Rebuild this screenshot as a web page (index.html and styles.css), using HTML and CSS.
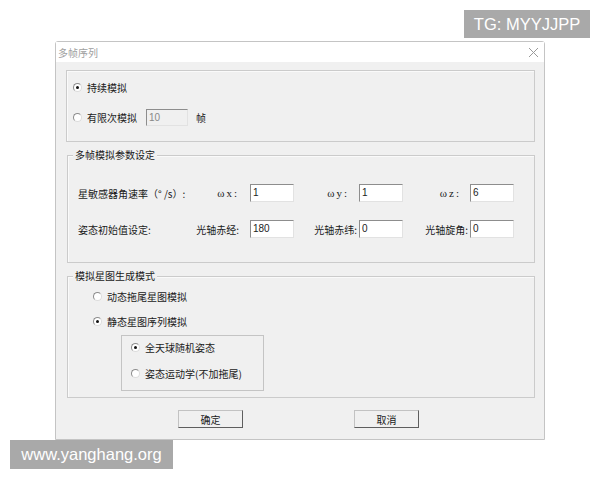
FILE: index.html
```html
<!DOCTYPE html>
<html lang="zh-CN">
<head>
<meta charset="utf-8">
<title>多帧序列</title>
<link rel="stylesheet" href="styles.css">
</head>
<body>
<div class="page">
  <div class="tag tag-tg">TG: MYYJJPP</div>
  <div class="dialog">
    <div class="titlebar">
      <span class="title">多帧序列</span>
      <svg class="close" width="11" height="11" viewBox="0 0 11 11"><path d="M1 1 L10 10 M10 1 L1 10" stroke="#9a9a9a" stroke-width="1" fill="none"/></svg>
    </div>
    <div class="body">
      <div class="group g1">
        <div class="row"><span class="radio on"></span><span>持续模拟</span></div>
        <div class="row"><span class="radio"></span><span>有限次模拟</span><span class="input disabled">10</span><span class="unit">帧</span></div>
      </div>
      <div class="group g2">
        <span class="legend">多帧模拟参数设定</span>
        <div class="grid">
          <span class="main">星敏感器角速率（° /s）:</span>
          <span class="sub c2 omega">ωx:</span><span class="input">1</span>
          <span class="sub c4 omega">ωy:</span><span class="input">1</span>
          <span class="sub c6 omega">ωz:</span><span class="input">6</span>
          <span class="main">姿态初始值设定:</span>
          <span class="sub c2">光轴赤经:</span><span class="input">180</span>
          <span class="sub c4 tight">光轴赤纬:</span><span class="input">0</span>
          <span class="sub c6 tight">光轴旋角:</span><span class="input">0</span>
        </div>
      </div>
      <div class="group g3">
        <span class="legend">模拟星图生成模式</span>
        <div class="row r3"><span class="radio"></span><span>动态拖尾星图模拟</span></div>
        <div class="row r3"><span class="radio on"></span><span>静态星图序列模拟</span></div>
        <div class="inner">
          <div class="row r3"><span class="radio on"></span><span>全天球随机姿态</span></div>
          <div class="row r3"><span class="radio"></span><span>姿态运动学(不加拖尾)</span></div>
        </div>
      </div>
      <div class="buttons">
        <span class="btn">确定</span>
        <span class="btn">取消</span>
      </div>
    </div>
  </div>
  <div class="tag tag-www">www.yanghang.org</div>
</div>
</body>
</html>
```
FILE: styles.css
```css
* { box-sizing: border-box; }
html, body { margin: 0; padding: 0; background: #fff; }
body {
  font-family: "Noto Sans CJK SC", "Noto Sans", sans-serif;
  font-size: 10px;
  color: #1a1a1a;
}
.page {
  position: relative;
  width: 600px;
  height: 480px;
  padding-top: 41px;
  overflow: hidden;
}
.tag {
  position: absolute;
  background: #a9a9a9;
  color: #fff;
  font-family: "Liberation Sans", Arial, sans-serif;
  display: flex;
  align-items: center;
  justify-content: center;
}
.tag-tg { left: 464px; top: 10px; width: 126px; height: 28px; font-size: 16.5px; }
.tag-www { left: 10px; top: 440px; width: 163px; height: 29px; font-size: 16.5px; }

.dialog {
  margin-left: 55px;
  width: 490px;
  border: 1px solid #c4c4c4;
  border-radius: 3px 3px 0 0;
  background: #f0f0f0;
}
.titlebar {
  height: 20px;
  background: #fff;
  display: flex;
  align-items: center;
  justify-content: space-between;
  padding: 0 5px 0 2px;
}
.title { color: #a0a0a0; font-size: 10px; }
.close { display: block; }

.body { padding: 8px 9px 11px 10px; }

.group {
  position: relative;
  border: 1px solid #cbcbcb;
  box-shadow: inset 1px 1px 0 #fafafa;
}
.legend {
  position: absolute;
  left: 5px;
  top: -8px;
  padding: 0 2px;
  background: #f0f0f0;
  line-height: 14px;
}
.row { display: flex; align-items: center; }
.radio {
  width: 9px;
  height: 9px;
  border-radius: 50%;
  border: 1px solid #8c8c8c;
  border-right-color: #dcdcdc;
  border-bottom-color: #dcdcdc;
  background: #fff;
  margin-right: 5px;
  display: flex;
  align-items: center;
  justify-content: center;
  flex: none;
}
.radio.on::after {
  content: "";
  width: 3px;
  height: 3px;
  border-radius: 50%;
  background: #111;
}

.g1 { height: 72px; padding: 7px 0 0 6px; }
.g1 .row { height: 18px; }
.g1 .row + .row { margin-top: 12px; }
.g1 .input { margin-left: 9px; width: 42px; }
.unit { margin-left: 8px; }

.input {
  height: 18px;
  background: #fff;
  border: 1px solid #8d8d8d;
  border-right-color: #e2e2e2;
  border-bottom-color: #e2e2e2;
  font-family: "Liberation Sans", Arial, sans-serif;
  font-size: 10px;
  line-height: 16px;
  padding-left: 2px;
  color: #222;
}
.input.disabled { background: #f0f0f0; color: #888; height: 17px; }

.g2 { margin-top: 13px; height: 108px; margin-left: 1px; }
.grid {
  display: grid;
  grid-template-columns: 110px 62px 44px 65px 44px 67px 44px;
  row-gap: 18px;
  align-items: center;
  padding: 28px 0 0 10px;
}
.sub { text-align: right; white-space: nowrap; }
.c2 { padding-right: 11px; }
.c4 { padding-right: 10px; }
.c6 { padding-right: 9px; }
.tight { padding-right: 2px; }
.omega { font-family: "Liberation Serif", serif; letter-spacing: 2px; font-size: 11px; }

.g3 { margin-top: 13px; height: 122px; margin-left: 1px; padding: 11px 0 0 25px; }
.r3 { height: 16px; }
.g3 > .r3 + .r3 { margin-top: 9px; }
.inner {
  margin: 6px 0 0 28px;
  width: 143px;
  height: 56px;
  border: 1px solid #c4c4c4;
  padding: 3px 0 0 9px;
}
.inner .r3 + .r3 { margin-top: 10px; }

.buttons { display: flex; gap: 111px; margin-top: 12px; padding-left: 112px; }
.btn {
  width: 65px;
  height: 18px;
  display: flex;
  align-items: center;
  justify-content: center;
  border: 1px solid #c2c2c2;
  border-right-color: #5e5e5e;
  border-bottom-color: #5e5e5e;
  background: #f0f0f0;
}
```
